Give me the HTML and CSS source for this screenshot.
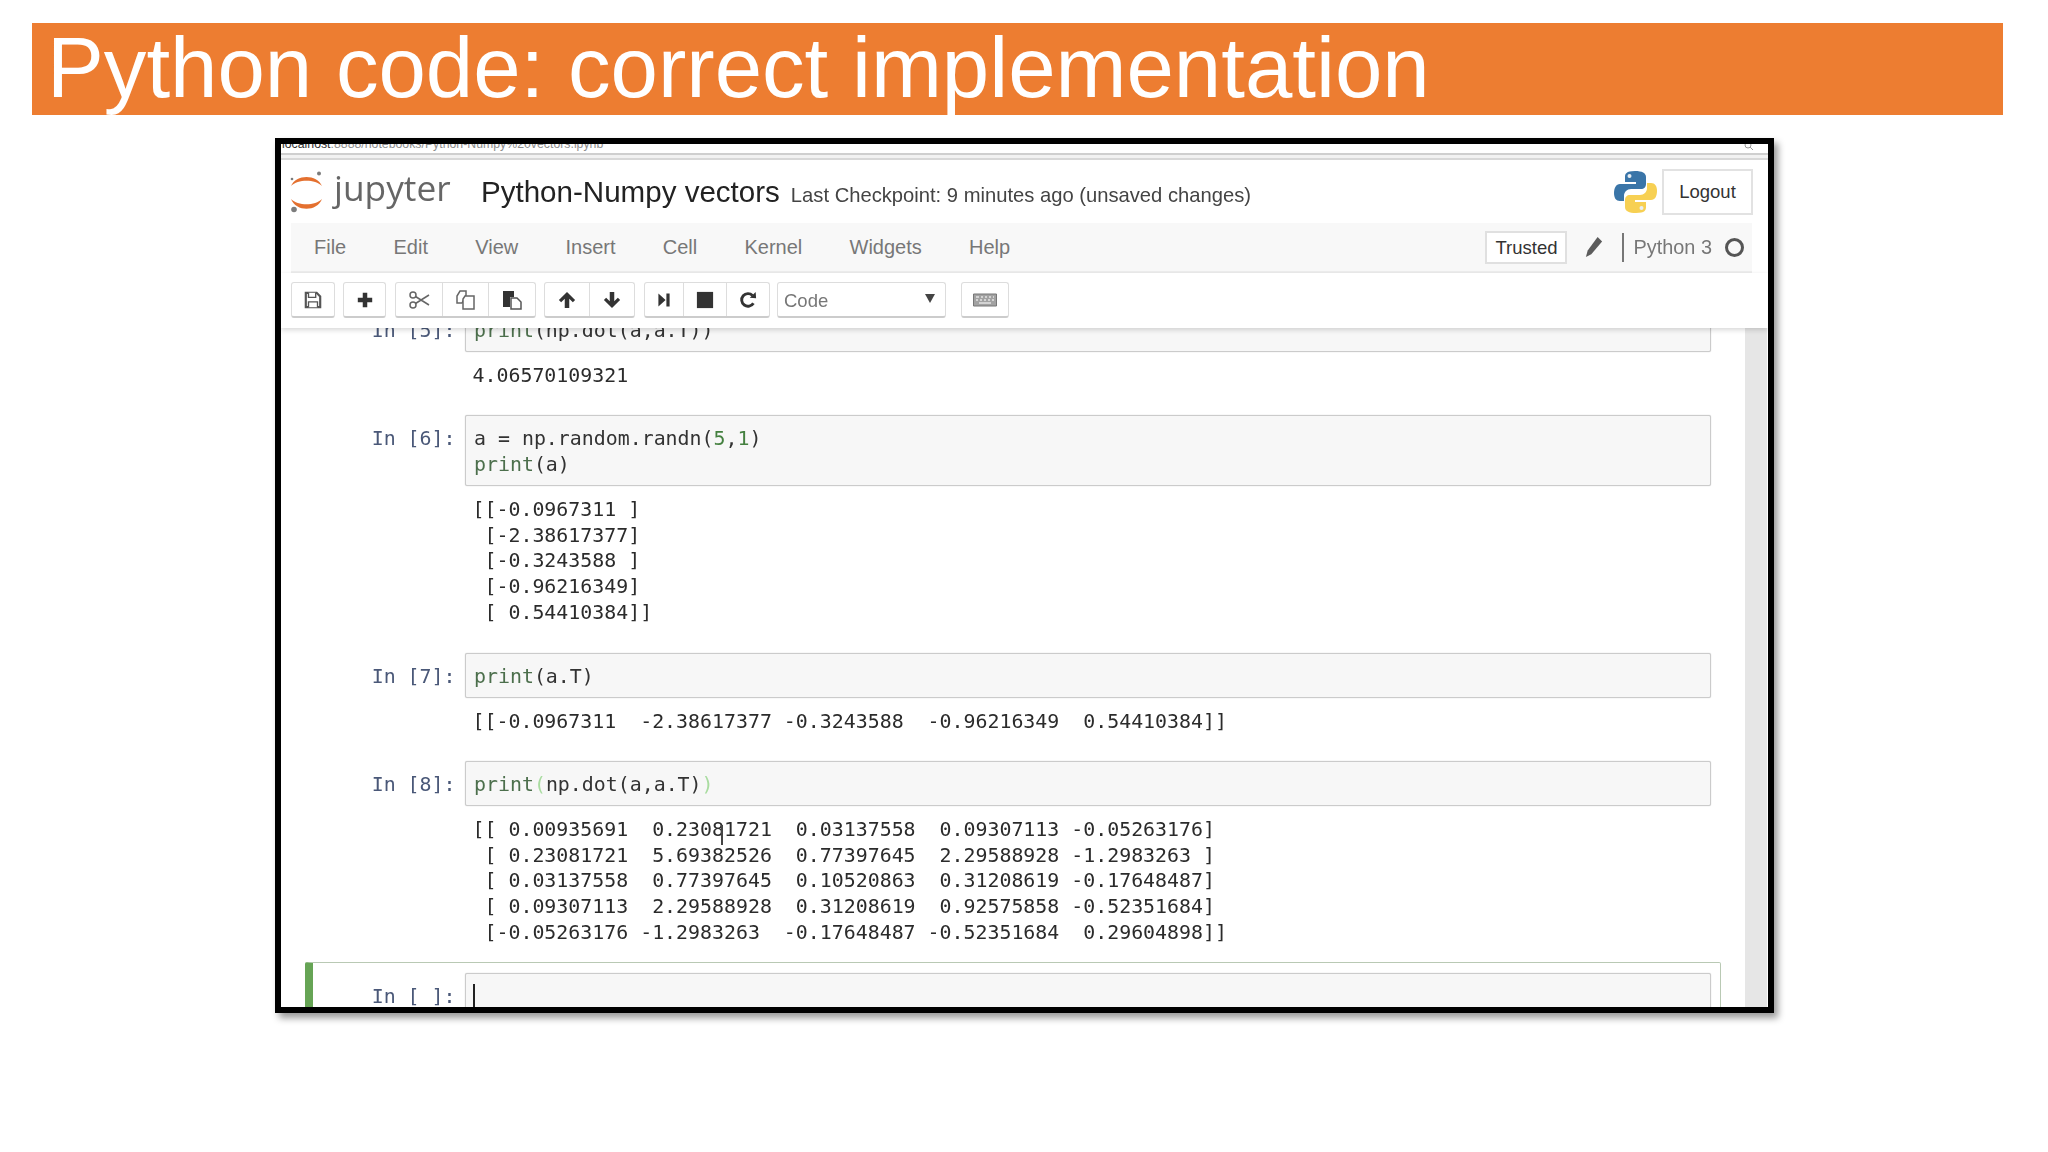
FILE: index.html
```html
<!DOCTYPE html>
<html lang="en">
<head>
<meta charset="utf-8">
<title>Python code: correct implementation</title>
<link rel="stylesheet" href="styles.css">
</head>
<body>
<h1 class="banner">Python code: correct implementation</h1>
<div class="window">
  <div class="screen">
    <div class="urlbar">
      <span class="url"><b>localhost</b>:8888/notebooks/Python-Numpy%20vectors.ipynb</span>
      <svg class="zoomglass" viewBox="0 0 10 10"><circle cx="4" cy="1" r="3"/><path d="M6 3l3 3"/></svg>
    </div>
    <header class="header">
      <svg class="logo" viewBox="0 0 33 42">
        <path class="arc" d="M1 15C6 3 27 3 32 15C25 8 8 8 1 15Z"/>
        <path class="arc" d="M1 28C6 41 27 41 32 28C25 35 8 35 1 28Z"/>
        <circle class="dot" cx="29" cy="2.500" r="2"/>
        <circle class="dot" cx="2" cy="8" r="1.300"/>
        <circle class="dot" cx="4" cy="38.500" r="2.800"/>
      </svg>
      <span class="brand">jupyter</span>
      <span class="nbname">Python-Numpy vectors</span>
      <span class="checkpoint">Last Checkpoint: 9 minutes ago (unsaved changes)</span>
      <svg class="pylogo" viewBox="0 0 43 44">
        <path class="pyblue" d="M21 1C12 1 11 4 11 7V12H22V14H6C2 14 0 18 0 23C0 28 2 31 6 31H10V26C10 22 13 19 17 19H27C30 19 32 17 32 14V7C32 3 28 1 21 1Z"/>
        <path class="pyyellow" d="M22 43C31 43 32 40 32 37V32H21V30H37C41 30 43 26 43 21C43 16 41 13 37 13H33V18C33 22 30 25 26 25H16C13 25 11 27 11 30V37C11 41 15 43 22 43Z"/>
        <circle class="pyeye" cx="15.500" cy="6" r="2"/>
        <circle class="pyeye" cx="27.500" cy="38" r="2"/>
      </svg>
      <button class="logout">Logout</button>
    </header>
    <nav class="menubar">
      <span>File</span><span>Edit</span><span>View</span><span>Insert</span><span>Cell</span><span>Kernel</span><span>Widgets</span><span>Help</span>
      <div class="kernel">
        <button class="trusted">Trusted</button>
        <svg class="pencil" viewBox="0 0 20 24"><path d="M14 1L19 6L7 20L1 23L3 16Z"/></svg>
        <span class="sep"></span>
        <span class="kname">Python 3</span>
        <span class="ring"></span>
      </div>
    </nav>
    <div class="toolbar">
      <div class="group g-single"><button>
        <svg viewBox="0 0 20 20"><path class="line" d="M2 2H14L18 6V18H2Z"/><path class="line thin" d="M5 2V7H13V2M5 18V12H15V18"/></svg>
      </button></div>
      <div class="group g-plus"><button>
        <svg viewBox="0 0 20 20"><path d="M7.500 2H12.500V7.500H18V12.500H12.500V18H7.500V12.500H2V7.500H7.500Z"/></svg>
      </button></div>
      <div class="group g-edit">
        <button><svg class="soft wide" viewBox="0 0 22 20"><circle class="line thin" cx="5" cy="5" r="3"/><circle class="line thin" cx="5" cy="15" r="3"/><path class="line thin" d="M7.500 6.500L21 15M7.500 13.500L21 5"/></svg></button>
        <button><svg class="soft wide" viewBox="0 0 22 22"><path class="line thin" d="M5 2H11L11 6L7 14H2V7Z"/><path class="line thin" d="M10 7H19V20H8V10Z"/></svg></button>
        <button><svg class="wide" viewBox="0 0 22 22"><path d="M2 2H13V8H9V18H2Z"/><path class="line thin" d="M10 9H16L20 13V20H10Z"/></svg></button>
      </div>
      <div class="group g-move">
        <button><svg viewBox="0 0 20 20"><path d="M10 1L19 10L16.500 12.500L12.500 8.500V19H7.500V8.500L3.500 12.500L1 10Z"/></svg></button>
        <button><svg viewBox="0 0 20 20"><path d="M10 19L19 10L16.500 7.500L12.500 11.500V1H7.500V11.500L3.500 7.500L1 10Z"/></svg></button>
      </div>
      <div class="group g-run">
        <button><svg class="step" viewBox="0 0 20 20"><path d="M3 2L12 10L3 18ZM13 2H17V18H13Z"/></svg></button>
        <button><svg viewBox="0 0 20 20"><path d="M1 1H19V19H1Z"/></svg></button>
        <button><svg viewBox="0 0 20 20"><path class="line bold" d="M16 13.500A7 7 0 1 1 15 5"/><path d="M12 7.500L19 8L18.500 1Z"/></svg></button>
      </div>
      <div class="select"><span>Code</span><i class="caret"></i></div>
      <div class="group g-keys"><button>
        <svg viewBox="0 0 24 16"><path class="keys" d="M0.500 2H23.500V14H0.500Z"/><path class="keygaps" d="M3 5H6M8 5H10M12 5H14M16 5H18M20 5H21M3 8H5M7 8H9M11 8H13M15 8H17M19 8H21M6 11H18"/></svg>
      </button></div>
    </div>
    <div class="workspace">
      <main class="notebook">
        <section class="cell first">
          <div class="input"><div class="prompt">In [5]:</div><pre class="code"><span class="kw">print</span>(np.dot(a,a.T))</pre></div>
          <pre class="output">4.06570109321</pre>
        </section>
        <section class="cell">
          <div class="input"><div class="prompt">In [6]:</div><pre class="code">a = np.random.randn(<span class="num">5</span>,<span class="num">1</span>)
<span class="kw">print</span>(a)</pre></div>
          <pre class="output multi">[[-0.0967311 ]
 [-2.38617377]
 [-0.3243588 ]
 [-0.96216349]
 [ 0.54410384]]</pre>
        </section>
        <section class="cell">
          <div class="input"><div class="prompt">In [7]:</div><pre class="code"><span class="kw">print</span>(a.T)</pre></div>
          <pre class="output">[[-0.0967311  -2.38617377 -0.3243588  -0.96216349  0.54410384]]</pre>
        </section>
        <section class="cell">
          <div class="input"><div class="prompt">In [8]:</div><pre class="code"><span class="kw">print</span><span class="match">(</span>np.dot(a,a.T)<span class="match">)</span></pre></div>
          <pre class="output multi">[[ 0.00935691  0.23081721  0.03137558  0.09307113 -0.05263176]
 [ 0.23081721  5.69382526  0.77397645  2.29588928 -1.2983263 ]
 [ 0.03137558  0.77397645  0.10520863  0.31208619 -0.17648487]
 [ 0.09307113  2.29588928  0.31208619  0.92575858 -0.52351684]
 [-0.05263176 -1.2983263  -0.17648487 -0.52351684  0.29604898]]<span class="ibeam"></span></pre>
        </section>
        <section class="cell selected">
          <div class="input"><div class="prompt">In [ ]:</div><pre class="code"><span class="caretline"></span> </pre></div>
        </section>
      </main>
      <div class="scrollbar"></div>
    </div>
  </div>
</div>
</body>
</html>
```

FILE: styles.css
```css
* { box-sizing: border-box; }
html, body { margin: 0; padding: 0; background: #fff; }
body { width: 2048px; height: 1152px; overflow: hidden; font-family: "Liberation Sans", Arial, sans-serif; }

.banner {
  margin: 23px 45px 0 32px;
  height: 92px;
  padding-left: 15px;
  background: #ed7d31;
  color: #fff;
  font-size: 85.2px;
  font-weight: 400;
  line-height: 90px;
  white-space: nowrap;
}

.window {
  margin: 23px 0 0 275px;
  width: 1499px;
  height: 875px;
  border: 6px solid #000;
  box-shadow: 4px 5px 7px rgba(0, 0, 0, .4);
  background: #fff;
  overflow: hidden;
}
.screen { height: 100%; display: flex; flex-direction: column; filter: blur(.7px); }

.urlbar {
  height: 16px;
  flex: none;
  display: flex;
  justify-content: space-between;
  padding-right: 14px;
  border-bottom: 2px solid #d8d8d8;
  background: linear-gradient(#fff 0, #fff 9px, #cfcfcf 9px, #cfcfcf 11px, #f2f2f2 11px);
  overflow: hidden;
}
.url { font-size: 12.3px; line-height: 1px; color: #8d8d8d; white-space: nowrap; margin-left: 1px; }
.url b { color: #333; font-weight: 400; }
.zoomglass { width: 10px; height: 10px; fill: none; stroke: #999; stroke-width: 1; }

.header { height: 63px; flex: none; display: flex; align-items: center; padding: 0 15px 0 9px; }
.logo { width: 33px; height: 42px; flex: none; }
.arc { fill: #e4702f; }
.dot { fill: #7c7c7c; }
.brand { margin-left: 11px; font-family: "Open Sans", sans-serif; font-size: 35.3px; line-height: 1; color: #666; margin-top: -7px; width: 147px; }
.nbname { font-size: 29.55px; color: #222; margin-top: 1px; white-space: nowrap; }
.checkpoint { margin-left: 11px; font-size: 20.2px; color: #444; margin-top: 8px; white-space: nowrap; }
.pylogo { width: 43px; height: 44px; flex: none; margin-left: auto; margin-right: 5px; margin-top: 0; }
.pyblue { fill: #3a75a8; }
.pyyellow { fill: #f7d053; }
.pyeye { fill: #e8eef3; }
.logout {
  width: 91px;
  height: 46px;
  margin-top: 1px;
  border: 2px solid #e2e2e2;
  background: #fff;
  font: 18.5px "Liberation Sans", sans-serif;
  color: #333;
  padding: 0;
}

.menubar {
  height: 50px;
  flex: none;
  margin: 0 16px 0 10px;
  padding: 0 8px 0 23px;
  display: flex;
  align-items: center;
  gap: 47.25px;
  background: #f8f8f8;
  border-bottom: 2px solid #eeeeee;
  font-size: 20px;
  color: #777;
}
.kernel { margin-left: auto; display: flex; align-items: center; }
.trusted {
  width: 82px;
  height: 33px;
  padding: 0;
  margin-top: 1px;
  background: #fff;
  border: 2px solid #e0e0e0;
  font: 18.5px "Liberation Sans", sans-serif;
  color: #333;
}
.pencil { width: 18px; height: 22px; margin-left: 18px; fill: #5c5c5c; }
.sep { width: 2px; height: 29px; margin-left: 19px; background: #777; }
.kname { margin-left: 9px; font-size: 19.9px; color: #777; white-space: nowrap; }
.ring { width: 19px; height: 19px; margin-left: 13px; border: 3px solid #555; border-radius: 50%; }

.toolbar {
  position: relative;
  z-index: 1;
  height: 55px;
  flex: none;
  padding: 9px 0 0 10px;
  display: flex;
  align-items: flex-start;
  background: #fff;
  box-shadow: 0 2px 5px rgba(0, 0, 0, .16);
}
.group { display: flex; height: 36px; border: 1px solid #ddd; border-bottom: 2px solid #ccc; border-radius: 3px; background: #fff; }
.group button { flex: 1; border: 0; border-left: 1px solid #ddd; background: none; padding: 0; display: flex; align-items: center; justify-content: center; }
.group button:first-child { border-left: 0; }
.group svg { width: 18px; height: 18px; fill: #333; }
.group svg.soft { fill: none; }
.group svg.wide { width: 22px; height: 22px; }
.group svg.step { width: 16px; height: 16px; }
.line { fill: none; stroke: #555; stroke-width: 2.4; }
.line.thin { stroke-width: 1.5; fill: #fff; }
.line.bold { stroke: #333; stroke-width: 3.2; fill: none; }
.soft .line.thin { stroke: #666; }
.g-single { width: 44px; margin-right: 8px; }
.g-plus { width: 43px; margin-right: 9px; }
.g-edit { width: 141px; margin-right: 8px; }
.g-move { width: 91px; margin-right: 9px; }
.g-run { width: 126px; margin-right: 7px; }
.g-run button:first-child { flex: 0 0 38px; }
.g-keys { width: 48px; margin-left: 15px; }
.g-keys svg { width: 24px; height: 16px; }
.keys { fill: #a2a2a2; stroke: #777; }
.keygaps { fill: none; stroke: #e4e4e4; stroke-width: 1.6; }
.select {
  width: 169px;
  height: 36px;
  padding: 2px 10px 0 6px;
  display: flex;
  align-items: center;
  justify-content: space-between;
  border: 1px solid #ddd;
  border-bottom: 2px solid #ccc;
  border-radius: 3px;
  font-size: 18.5px;
  color: #777;
}
.caret { width: 0; height: 0; margin-bottom: 5px; border: 5px solid transparent; border-top: 9px solid #444; border-bottom: 0; }

.workspace { flex: 1; min-height: 0; display: flex; overflow: hidden; }
.notebook { width: 1464px; flex: none; padding: 0 24px 0 24px; overflow: hidden; }
.scrollbar { width: 22px; flex: none; background: #e6e6e6; }

pre, .prompt { font-family: "DejaVu Sans Mono", monospace; font-size: 19.9px; line-height: 26px; margin: 0; }
.cell {
  border: 1px solid transparent;
  border-left-width: 8px;
  padding: 10px 9px 10px 0;
  margin-bottom: 4px;
}
.cell.first { margin-top: -32px; }
.cell.selected { border-color: #b9c9b4; border-left-color: #66a455; border-radius: 2px; }
.input { display: flex; }
.prompt { width: 152px; flex: none; padding: 11px 9.5px 0 0; text-align: right; color: #4a5878; white-space: nowrap; }
.code {
  flex: 1;
  padding: 10px 8px 7px;
  border: 1px solid #cbcbcb;
  border-radius: 2px;
  background: #f7f7f7;
  color: #333;
  box-shadow: 0 0 1px #bbb;
}
.kw { color: #4c6f4c; }
.num { color: #44803f; }
.match { color: #a9dca0; }
.output { position: relative; padding: 10.75px 0 0.5px 159.5px; line-height: 25.75px; color: #2b2b2b; }
.output.multi { padding-bottom: 1.5px; }
.ibeam { position: absolute; left: 408px; top: 19px; width: 2px; height: 20px; background: #444; }
.caretline { display: inline-block; width: 2px; height: 26px; margin-left: -1px; vertical-align: top; background: #222; }
```
